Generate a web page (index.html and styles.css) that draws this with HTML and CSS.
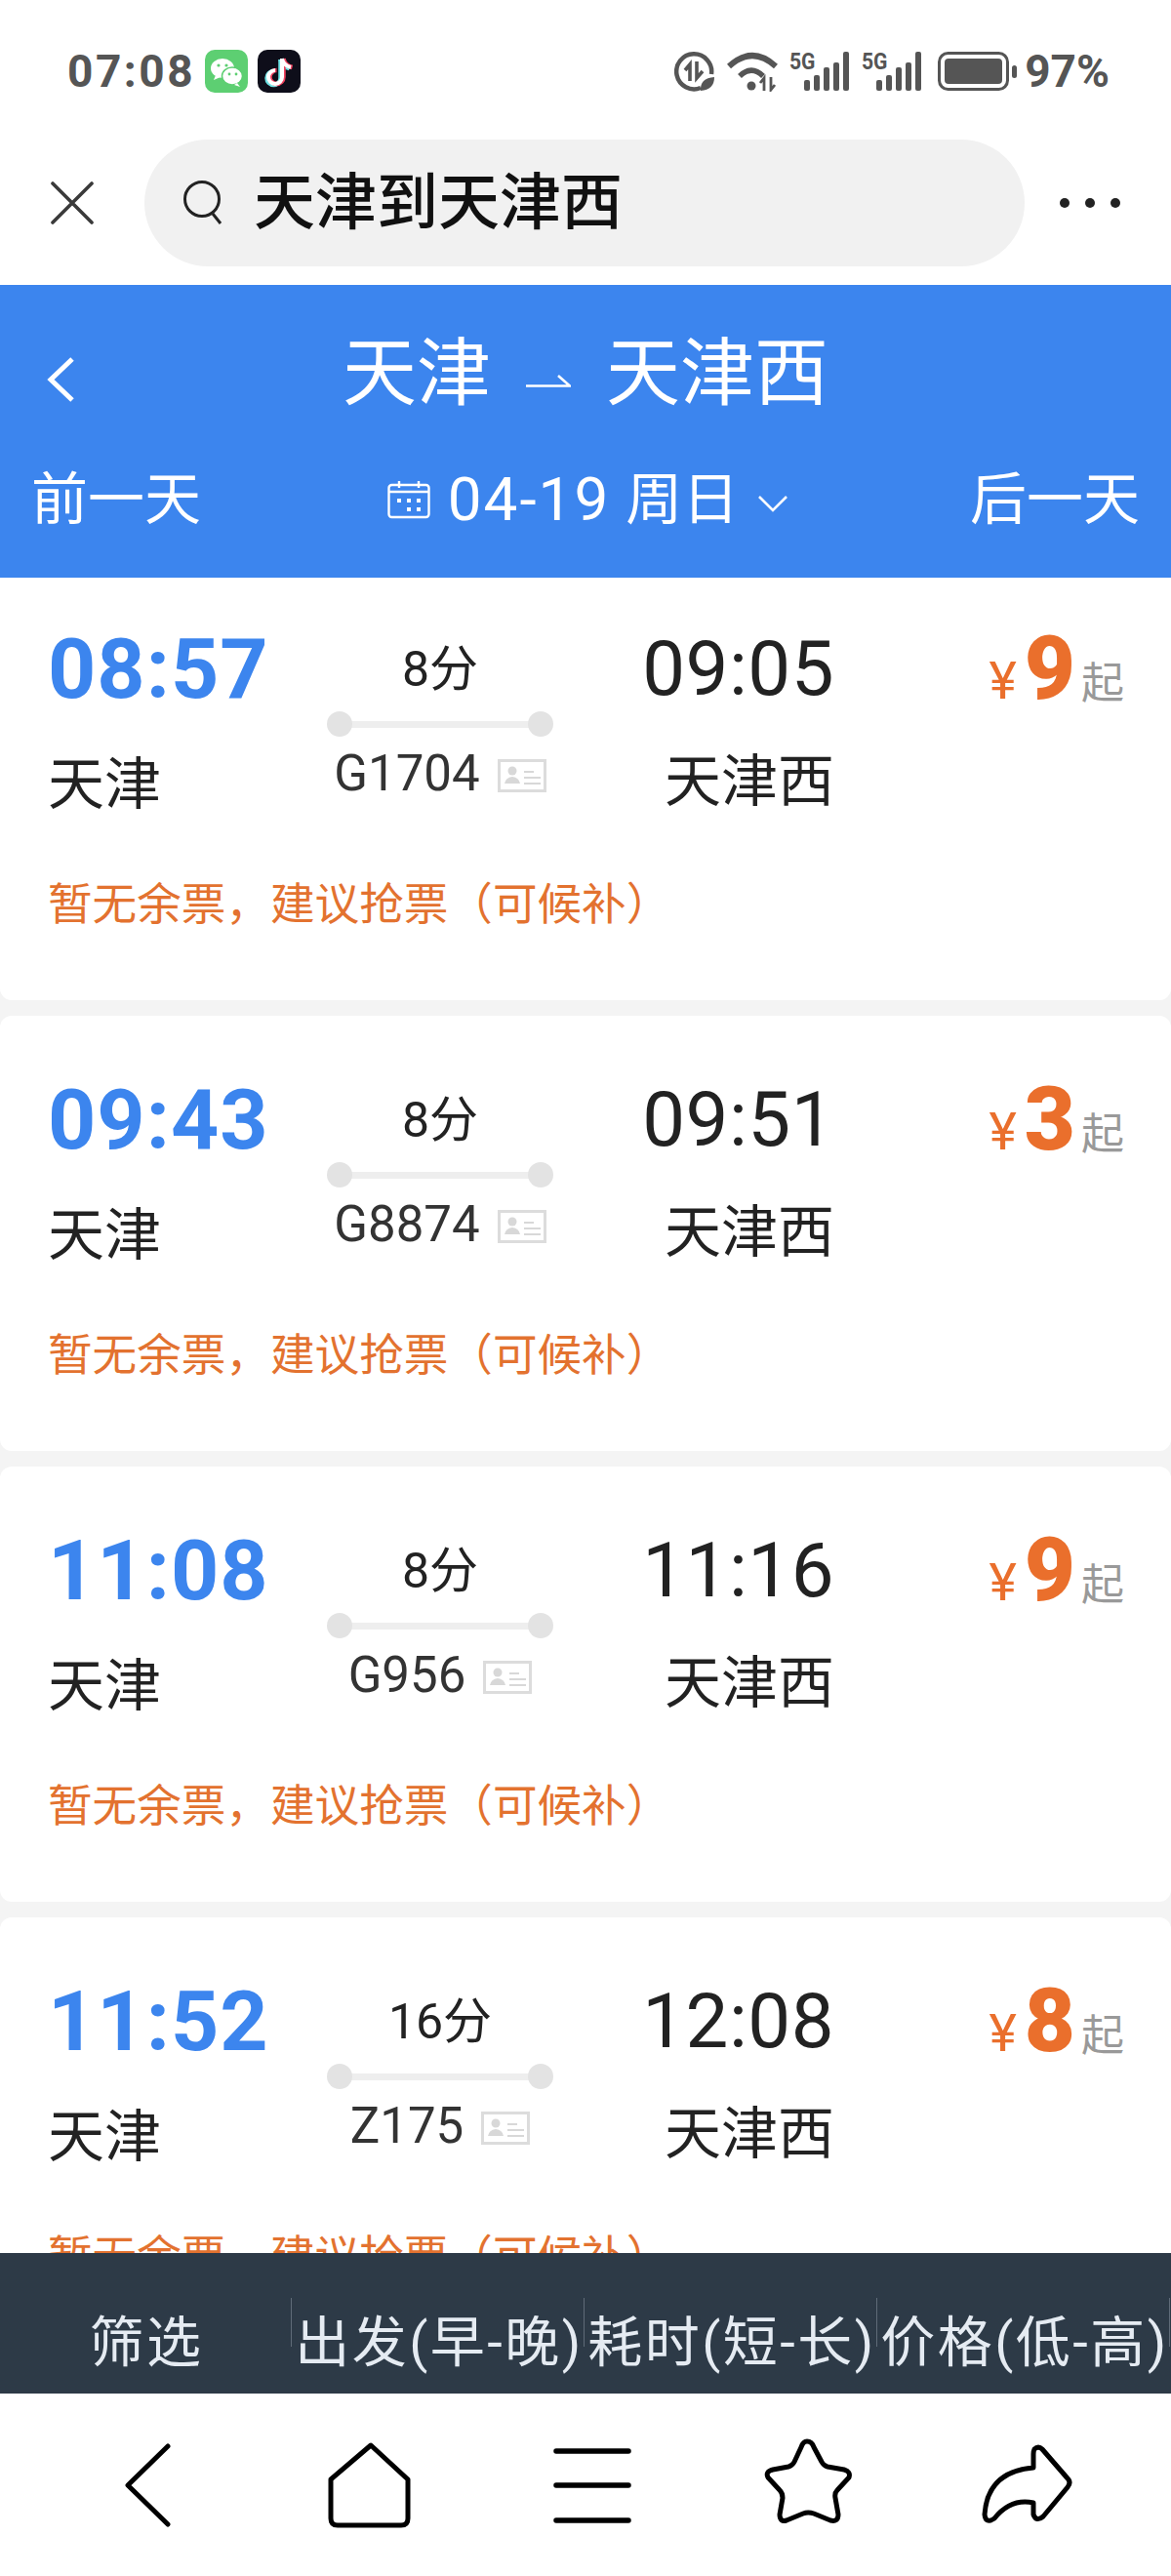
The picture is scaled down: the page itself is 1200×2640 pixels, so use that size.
FILE: index.html
```html
<!DOCTYPE html>
<html lang="zh-CN">
<head>
    <meta charset="UTF-8">
    <meta name="viewport" content="width=device-width, initial-scale=1.0">
    <title>天津到天津西</title>
    <link rel="stylesheet" href="styles.css">
</head>
<body>
    <svg class="defs" width="0" height="0">
        <symbol id="id-card" viewBox="0 0 50 34">
            <rect x="1.5" y="1.5" width="47" height="31" fill="none" stroke="#dcdcdc" stroke-width="3"/>
            <circle cx="15" cy="12" r="4.5" fill="#d8d8d8"/>
            <path d="M7 25 Q8 19 15 18 Q22 19 23 25 Z" fill="#d8d8d8"/>
            <path d="M27 13H37M27 19H44M27 25H44" stroke="#d8d8d8" stroke-width="2.2"/>
        </symbol>
        <symbol id="bars" viewBox="0 0 62 40">
            <rect x="15" y="29" width="6" height="11" rx="2" fill="#555"/>
            <rect x="25" y="24" width="6" height="16" rx="2" fill="#555"/>
            <rect x="35" y="16" width="6" height="24" rx="2" fill="#555"/>
            <rect x="45" y="11" width="6" height="29" rx="2" fill="#555"/>
            <rect x="55" y="0" width="6" height="40" rx="2" fill="#555"/>
        </symbol>
    </svg>

    <div class="app">
        <div class="status-bar">
            <div class="status-left">
                <span class="status-text clock">07:08</span>
                <svg class="app-icon" width="44" height="44" viewBox="0 0 44 44">
                    <rect width="44" height="44" rx="10" fill="#5dcf72"/>
                    <ellipse cx="18" cy="19" rx="12" ry="10" fill="#fff"/>
                    <path d="M11 26l-2 5 7-3z" fill="#fff"/>
                    <ellipse cx="28" cy="27" rx="10.5" ry="9" fill="#fff" stroke="#5dcf72" stroke-width="1.5"/>
                    <path d="M33 34l3 4-6-2z" fill="#fff"/>
                    <circle cx="14" cy="16" r="1.6" fill="#5dcf72"/>
                    <circle cx="22" cy="16" r="1.6" fill="#5dcf72"/>
                    <circle cx="25" cy="25" r="1.4" fill="#5dcf72"/>
                    <circle cx="32" cy="25" r="1.4" fill="#5dcf72"/>
                </svg>
                <svg class="app-icon" width="44" height="44" viewBox="0 0 44 44">
                    <rect width="44" height="44" rx="10" fill="#0e0e1a"/>
                    <path d="M25 9V28A7 7 0 1 1 18 21" fill="none" stroke="#6fe3e6" stroke-width="4.5" transform="translate(-1.5 1)"/>
                    <path d="M25 9Q26 16 34 18" fill="none" stroke="#6fe3e6" stroke-width="4.5" transform="translate(-1.5 1)"/>
                    <path d="M25 9V28A7 7 0 1 1 18 21" fill="none" stroke="#f0415f" stroke-width="4.5" transform="translate(1.5 0)"/>
                    <path d="M25 9Q26 16 34 18" fill="none" stroke="#f0415f" stroke-width="4.5" transform="translate(1.5 0)"/>
                    <path d="M25 9V28A7 7 0 1 1 18 21" fill="none" stroke="#fff" stroke-width="4"/>
                    <path d="M25 9Q26 16 34 18" fill="none" stroke="#fff" stroke-width="4"/>
                </svg>
            </div>
            <div class="status-right">
                <svg width="42" height="42" viewBox="0 0 42 42">
                    <path d="M27 38A18 18 0 1 1 38 24" fill="none" stroke="#555" stroke-width="4.5"/>
                    <path d="M16 31V14l-5 6M23 11v17l6-7" fill="none" stroke="#555" stroke-width="3.6"/>
                    <path d="M27 41Q26 28 41 27Q41 40 27 41Z" fill="#555"/>
                </svg>
                <svg width="52" height="42" viewBox="0 0 52 42">
                    <path d="M2 16Q26 -6 50 16" fill="none" stroke="#555" stroke-width="6"/>
                    <path d="M13 26Q25 14 37 26" fill="none" stroke="#555" stroke-width="5.5"/>
                    <circle cx="25" cy="36" r="4.5" fill="#555"/>
                    <path d="M38 41V28l-4 5M45 27v13l4-5" fill="none" stroke="#555" stroke-width="2.8"/>
                </svg>
                <div class="signal">
                    <span class="net-label">5G</span>
                    <svg width="62" height="40"><use href="#bars"/></svg>
                </div>
                <div class="signal">
                    <span class="net-label">5G</span>
                    <svg width="62" height="40"><use href="#bars"/></svg>
                </div>
                <svg class="battery" width="82" height="40" viewBox="0 0 82 40">
                    <rect x="1.5" y="1.5" width="70" height="37" rx="9" fill="none" stroke="#555" stroke-width="3"/>
                    <rect x="7" y="7" width="59" height="26" rx="4" fill="#555"/>
                    <rect x="76" y="14" width="5" height="13" rx="2.5" fill="#555"/>
                </svg>
                <span class="status-text level">97%</span>
            </div>
        </div>

        <div class="search-row">
            <svg class="close-icon" width="44" height="44" viewBox="0 0 44 44">
                <path d="M2 2L42 42M42 2L2 42" stroke="#3a3a3a" stroke-width="3.6" stroke-linecap="round"/>
            </svg>
            <div class="search-box">
                <svg width="42" height="46" viewBox="0 0 42 46">
                    <circle cx="19" cy="19" r="17.5" fill="none" stroke="#222" stroke-width="3"/>
                    <path d="M30 34L38 44" stroke="#222" stroke-width="3"/>
                </svg>
                <span class="search-text">天津到天津西</span>
            </div>
            <div class="more-dots"><i></i><i></i><i></i></div>
        </div>

        <div class="route-header">
            <div class="route-top">
                <svg class="route-back" width="30" height="48" viewBox="0 0 30 48">
                    <path d="M27 3L5 24L27 45" fill="none" stroke="#fff" stroke-width="5"/>
                </svg>
                <div class="route-title">
                    <span>天津</span>
                    <svg width="46" height="14" viewBox="0 0 46 14">
                        <path d="M0 12.5H45L33 2" fill="none" stroke="#fff" stroke-width="2.6"/>
                    </svg>
                    <span>天津西</span>
                </div>
            </div>
            <div class="route-dates">
                <span>前一天</span>
                <div class="date-picker">
                    <svg width="44" height="40" viewBox="0 0 44 40">
                        <rect x="1.5" y="5" width="41" height="33" rx="3" fill="none" stroke="#fff" stroke-width="2.4"/>
                        <path d="M2 12H42M12 1V8M32 1V8" stroke="#fff" stroke-width="2.4"/>
                        <path d="M10 19h4v4h-4zM20 19h4v4h-4zM30 19h4v4h-4zM20 28h4v4h-4zM30 28h4v4h-4z" fill="#fff"/>
                    </svg>
                    <span class="date-num">04-19</span>
                    <span class="date-week">周日</span>
                    <svg width="30" height="18" viewBox="0 0 30 18">
                        <path d="M1 2L15 16L29 2" fill="none" stroke="#fff" stroke-width="2.6"/>
                    </svg>
                </div>
                <span>后一天</span>
            </div>
        </div>

        <div class="train-list">
            <div class="train-card first">
                <div class="depart-time">08:57</div>
                <div class="middle">
                    <div class="duration">8分</div>
                    <div class="track"></div>
                    <div class="train-no">G1704 <svg width="50" height="34"><use href="#id-card"/></svg></div>
                </div>
                <div class="arrive-time">09:05</div>
                <div class="price"><span class="yen">¥</span><span class="amount">9</span><span class="from">起</span></div>
                <div class="depart-name">天津</div>
                <div class="arrive-name">天津西</div>
                <div class="notice">暂无余票&#xFF0C;建议抢票&#xFF08;可候补&#xFF09;</div>
            </div>
            <div class="train-card">
                <div class="depart-time">09:43</div>
                <div class="middle">
                    <div class="duration">8分</div>
                    <div class="track"></div>
                    <div class="train-no">G8874 <svg width="50" height="34"><use href="#id-card"/></svg></div>
                </div>
                <div class="arrive-time">09:51</div>
                <div class="price"><span class="yen">¥</span><span class="amount">3</span><span class="from">起</span></div>
                <div class="depart-name">天津</div>
                <div class="arrive-name">天津西</div>
                <div class="notice">暂无余票&#xFF0C;建议抢票&#xFF08;可候补&#xFF09;</div>
            </div>
            <div class="train-card">
                <div class="depart-time">11:08</div>
                <div class="middle">
                    <div class="duration">8分</div>
                    <div class="track"></div>
                    <div class="train-no">G956 <svg width="50" height="34"><use href="#id-card"/></svg></div>
                </div>
                <div class="arrive-time">11:16</div>
                <div class="price"><span class="yen">¥</span><span class="amount">9</span><span class="from">起</span></div>
                <div class="depart-name">天津</div>
                <div class="arrive-name">天津西</div>
                <div class="notice">暂无余票&#xFF0C;建议抢票&#xFF08;可候补&#xFF09;</div>
            </div>
            <div class="train-card">
                <div class="depart-time">11:52</div>
                <div class="middle">
                    <div class="duration">16分</div>
                    <div class="track"></div>
                    <div class="train-no">Z175 <svg width="50" height="34"><use href="#id-card"/></svg></div>
                </div>
                <div class="arrive-time">12:08</div>
                <div class="price"><span class="yen">¥</span><span class="amount">8</span><span class="from">起</span></div>
                <div class="depart-name">天津</div>
                <div class="arrive-name">天津西</div>
                <div class="notice">暂无余票&#xFF0C;建议抢票&#xFF08;可候补&#xFF09;</div>
            </div>
        </div>

        <div class="sort-bar">
            <div class="sort-item">筛选</div>
            <div class="sort-item">出发(早-晚)</div>
            <div class="sort-item">耗时(短-长)</div>
            <div class="sort-item">价格(低-高)</div>
        </div>

        <div class="nav-bar">
            <svg width="100" height="100" viewBox="0 0 100 100">
                <path d="M70 10L29 50L70 90" fill="none" stroke="#000" stroke-width="5" stroke-linecap="round" stroke-linejoin="round"/>
            </svg>
            <svg width="100" height="100" viewBox="0 0 100 100">
                <path d="M53 9L91 44V84Q91 91 84 91H19Q12 91 12 84V44Z" fill="none" stroke="#000" stroke-width="5" stroke-linejoin="round"/>
            </svg>
            <svg width="100" height="100" viewBox="0 0 100 100">
                <path d="M18 15H92M18 50H92M18 86H92" fill="none" stroke="#000" stroke-width="5.5" stroke-linecap="round"/>
            </svg>
            <svg class="star" width="100" height="100" viewBox="0 0 100 100">
                <path d="M47 5Q52 5 54 11L62 26Q64 30 68 31L85 34Q92 36 90 42L78 55Q75 58 76 63L79 80Q79 88 71 86L54 79Q48 77 43 79L26 86Q19 88 19 80L22 63Q22 58 19 55L7 42Q4 36 12 34L28 31Q32 30 34 26L41 11Q43 5 47 5Z" fill="none" stroke="#000" stroke-width="5" stroke-linejoin="round"/>
            </svg>
            <svg width="100" height="100" viewBox="0 0 100 100">
                <path d="M58 13Q62 9 66 13L92 43Q96 47 92 52L67 82Q60 88 57 80V68Q34 63 17 84Q8 90 7 80Q10 36 57 32V18Q57 15 58 13Z" fill="none" stroke="#000" stroke-width="5" stroke-linejoin="round"/>
            </svg>
        </div>
    </div>
</body>
</html>
```

FILE: styles.css
```css
* {
    box-sizing: border-box;
}

body {
    margin: 0;
    font-family: Roboto, "Noto Sans CJK SC", sans-serif;
    color: #222;
    background-color: #fff;
}

.defs {
    display: block;
}

.app {
    display: flex;
    flex-direction: column;
    height: 2640px;
    overflow: hidden;
}

.status-bar {
    display: flex;
    justify-content: space-between;
    align-items: center;
    height: 146px;
    padding: 0 63px 0 69px;
    flex-shrink: 0;
}

.status-left,
.status-right {
    display: flex;
    align-items: center;
}

.status-left {
    gap: 10px;
}

.status-right {
    gap: 12px;
}

.status-text {
    font-size: 46px;
    font-weight: 700;
    color: #555;
}

.clock {
    letter-spacing: 2.5px;
}

.level {
    margin-left: -5px;
}

.battery {
    margin-left: 4px;
}

.signal {
    position: relative;
    display: flex;
    width: 62px;
    height: 40px;
}

.net-label {
    position: absolute;
    left: 0;
    top: -2px;
    font-size: 24px;
    font-weight: 700;
    line-height: 24px;
    color: #555;
    transform: scaleX(0.88);
    transform-origin: left;
}

.search-row {
    display: flex;
    align-items: center;
    height: 146px;
    padding-bottom: 22px;
    flex-shrink: 0;
}

.close-icon {
    margin: 0 52px;
}

.search-box {
    display: flex;
    align-items: center;
    gap: 30px;
    width: 902px;
    height: 130px;
    padding-left: 40px;
    border-radius: 65px;
    background-color: #f1f1f1;
}

.search-text {
    margin-top: -14px;
    font-size: 63px;
    font-weight: 500;
    color: #111;
}

.more-dots {
    display: flex;
    gap: 16px;
    margin-left: 36px;
}

.more-dots i {
    width: 10px;
    height: 10px;
    border-radius: 50%;
    background-color: #222;
}

.route-header {
    height: 300px;
    padding: 41px 32px 0;
    background-color: #3c85ee;
    color: #fff;
    flex-shrink: 0;
}

.route-top {
    position: relative;
    display: flex;
    justify-content: center;
}

.route-back {
    position: absolute;
    left: 15px;
    top: 32px;
}

.route-title {
    display: flex;
    align-items: center;
    gap: 36px;
    font-size: 76px;
    line-height: 100px;
}

.route-title svg {
    margin-top: 14px;
}

.route-dates {
    display: flex;
    justify-content: space-between;
    align-items: center;
    margin-top: 40px;
    font-size: 58px;
    line-height: 78px;
}

.date-picker {
    display: flex;
    align-items: center;
    margin-left: 4px;
}

.date-num {
    margin-left: 18px;
    font-size: 62px;
    letter-spacing: 2px;
}

.date-week {
    margin-left: 16px;
}

.date-picker svg:last-child {
    margin: 8px 0 0 20px;
}

.train-list {
    flex: 1;
    min-height: 0;
    overflow: hidden;
    background-color: #f4f4f4;
}

.train-card {
    display: grid;
    grid-template-columns: 286px 232px 288px 1fr;
    grid-template-rows: 80px 70px 60px;
    height: 446px;
    margin-bottom: 16px;
    padding: 67px 48px 0 49px;
    border-radius: 12px;
    background-color: #fff;
}

.train-card.first {
    height: 433px;
    padding-top: 54px;
    border-radius: 0 0 12px 12px;
}

.depart-time,
.arrive-time {
    font-size: 78px;
    line-height: 80px;
}

.depart-time {
    font-size: 86px;
    font-weight: 700;
    letter-spacing: 1px;
    color: #3c85ee;
}

.arrive-time {
    letter-spacing: 0.5px;
    text-align: right;
}

.depart-name,
.arrive-name {
    grid-row: 2;
    margin-top: 43px;
    font-size: 58px;
    line-height: 70px;
}

.depart-name {
    grid-column: 1;
}

.arrive-name {
    grid-column: 3;
    margin-top: 40px;
    text-align: right;
}

.middle {
    grid-column: 2;
    grid-row: 1 / 3;
}

.duration {
    font-size: 50px;
    line-height: 80px;
    text-align: center;
}

.track {
    position: relative;
    height: 7px;
    margin: 13px 10px 0;
    background-color: #eeeeee;
}

.track::before,
.track::after {
    content: "";
    position: absolute;
    top: -10px;
    width: 26px;
    height: 26px;
    border-radius: 50%;
    background-color: #e3e3e3;
}

.track::before {
    left: -10px;
}

.track::after {
    right: -10px;
}

.train-no {
    display: flex;
    justify-content: center;
    align-items: center;
    gap: 18px;
    margin: 14px -20px 0;
    font-size: 51px;
    line-height: 66px;
    color: #333;
}

.train-no svg {
    margin-top: 3px;
}

.price {
    display: flex;
    justify-content: flex-end;
    align-items: baseline;
    line-height: 80px;
}

.yen {
    font-size: 54px;
    color: #ea6f2c;
}

.amount {
    margin-left: 8px;
    font-size: 90px;
    font-weight: 900;
    color: #ea6f2c;
}

.from {
    margin-left: 6px;
    font-size: 44px;
    color: #999;
}

.notice {
    grid-column: 1 / 5;
    grid-row: 3;
    margin-top: 102px;
    font-size: 45.6px;
    line-height: 60px;
    color: #e3722f;
}

.sort-bar {
    display: grid;
    grid-template-columns: repeat(4, 300px);
    align-items: center;
    height: 144px;
    background-color: #2d3a47;
    flex-shrink: 0;
}

.sort-item {
    position: relative;
    padding-top: 40px;
    font-size: 56px;
    line-height: 70px;
    letter-spacing: 2.5px;
    text-align: center;
    white-space: nowrap;
    color: #e5ebf2;
}

.sort-item::after {
    content: "";
    position: absolute;
    right: 1px;
    top: 29px;
    width: 1px;
    height: 50px;
    background-color: #5f6b78;
}

.nav-bar {
    display: grid;
    grid-template-columns: repeat(5, 225px);
    justify-items: center;
    align-items: center;
    height: 187px;
    padding-left: 39px;
    flex-shrink: 0;
}

.star {
    margin-left: 7px;
}
```
